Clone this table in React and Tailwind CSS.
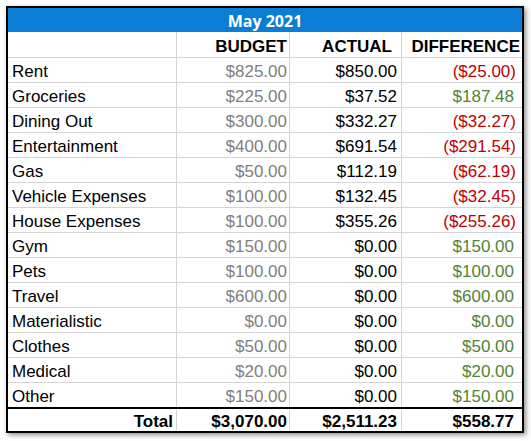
import React from 'react';

const rows = [
  { name: 'Rent', budget: '$825.00', actual: '$850.00', diff: '($25.00)', neg: true },
  { name: 'Groceries', budget: '$225.00', actual: '$37.52', diff: '$187.48' },
  { name: 'Dining Out', budget: '$300.00', actual: '$332.27', diff: '($32.27)', neg: true },
  { name: 'Entertainment', budget: '$400.00', actual: '$691.54', diff: '($291.54)', neg: true },
  { name: 'Gas', budget: '$50.00', actual: '$112.19', diff: '($62.19)', neg: true },
  { name: 'Vehicle Expenses', budget: '$100.00', actual: '$132.45', diff: '($32.45)', neg: true },
  { name: 'House Expenses', budget: '$100.00', actual: '$355.26', diff: '($255.26)', neg: true },
  { name: 'Gym', budget: '$150.00', actual: '$0.00', diff: '$150.00' },
  { name: 'Pets', budget: '$100.00', actual: '$0.00', diff: '$100.00' },
  { name: 'Travel', budget: '$600.00', actual: '$0.00', diff: '$600.00' },
  { name: 'Materialistic', budget: '$0.00', actual: '$0.00', diff: '$0.00' },
  { name: 'Clothes', budget: '$50.00', actual: '$0.00', diff: '$50.00' },
  { name: 'Medical', budget: '$20.00', actual: '$0.00', diff: '$20.00' },
  { name: 'Other', budget: '$150.00', actual: '$0.00', diff: '$150.00' },
];

const BudgetRow = ({ row }) => (
  <div className="flex h-[25px] border-b border-[#d4d4d4]">
    <div className="w-[169px] border-r border-[#d4d4d4] pl-[4px] pt-[3px] flex items-center">{row.name}</div>
    <div className="w-[113px] border-r border-[#d4d4d4] pr-[2px] pt-[3px] flex items-center justify-end text-[#808080]">
      {row.budget}
    </div>
    <div className="w-[112px] border-r border-[#d4d4d4] pr-[4px] pt-[3px] flex items-center justify-end">
      {row.actual}
    </div>
    <div
      className={
        row.neg
          ? 'w-[120px] pr-[6px] pt-[3px] flex items-center justify-end text-[#c00000]'
          : 'w-[120px] pr-[8px] pt-[3px] flex items-center justify-end text-[#548235]'
      }
    >
      {row.diff}
    </div>
  </div>
);

export default function App() {
  return (
    <div className="bg-white w-[531px] h-[441px] p-[6px]">
      <div
        className="w-[518px] border-2 border-black bg-white text-black text-[17px] leading-none shadow-[2px_2px_5px_rgba(0,0,0,0.45)]"
        style={{ fontFamily: '"Liberation Sans", Arial, sans-serif' }}
      >
        <div
          className="h-[24px] pt-[1px] bg-[#0b7dd5] text-white font-bold text-[16px] flex items-center justify-center"
          style={{ fontFamily: '"Open Sans", sans-serif' }}
        >
          May 2021
        </div>

        <div className="flex h-[26px] border-b border-[#d4d4d4] font-bold">
          <div className="w-[169px] border-r border-[#d4d4d4]" />
          <div className="w-[113px] border-r border-[#d4d4d4] pr-[2px] pt-[3px] flex items-center justify-end">
            BUDGET
          </div>
          <div className="w-[112px] border-r border-[#d4d4d4] pr-[9px] pt-[3px] flex items-center justify-end">
            ACTUAL
          </div>
          <div className="w-[120px] pr-[2px] pt-[3px] flex items-center justify-end">DIFFERENCE</div>
        </div>

        {rows.map((row) => (
          <BudgetRow key={row.name} row={row} />
        ))}

        <div className="flex h-[24px] -mt-px border-t-2 border-black font-bold">
          <div className="w-[169px] border-r border-[#d4d4d4] pr-[3px] pt-[2px] flex items-center justify-end">Total</div>
          <div className="w-[113px] border-r border-[#d4d4d4] pr-[2px] pt-[2px] flex items-center justify-end">
            $3,070.00
          </div>
          <div className="w-[112px] border-r border-[#d4d4d4] pr-[4px] pt-[2px] flex items-center justify-end">
            $2,511.23
          </div>
          <div className="w-[120px] pr-[8px] pt-[2px] flex items-center justify-end">$558.77</div>
        </div>
      </div>
    </div>
  );
}
